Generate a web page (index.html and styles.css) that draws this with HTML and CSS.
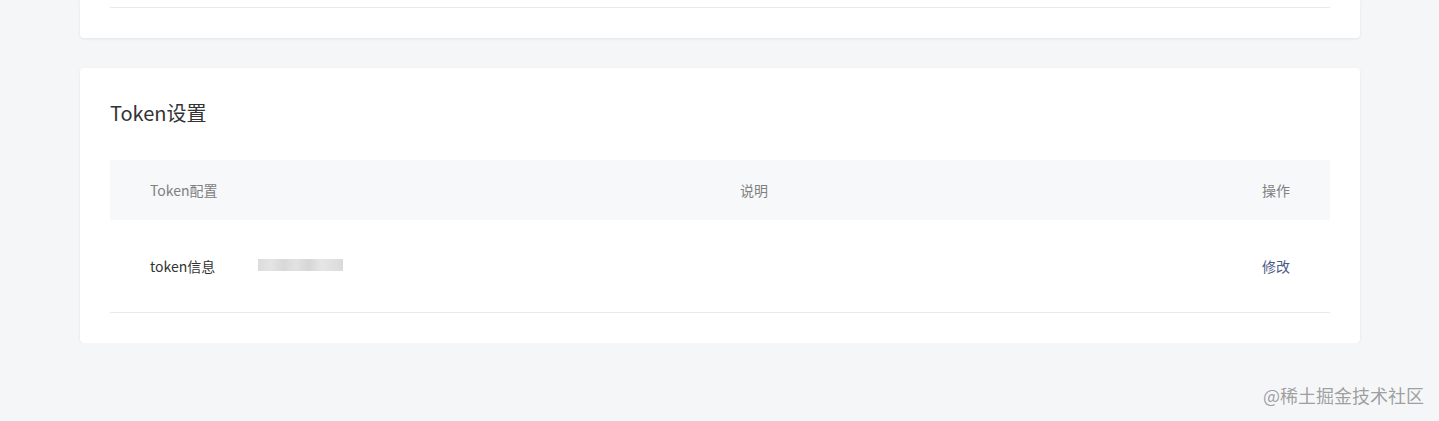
FILE: index.html
```html
<!DOCTYPE html>
<html lang="zh-CN">
<head>
<meta charset="utf-8">
<title>Token设置</title>
<link rel="stylesheet" href="styles.css">
</head>
<body>
<div class="page">
  <div class="card card-top">
    <div class="top-rest"></div>
  </div>
  <div class="card card-main">
    <h2 class="title">Token设置</h2>
    <div class="table">
      <div class="thead">
        <div class="cell">Token配置</div>
        <div class="cell">说明</div>
        <div class="cell right">操作</div>
      </div>
      <div class="trow">
        <div class="cell token-cell">
          <span class="label">token信息</span>
          <span class="masked"></span>
        </div>
        <div class="cell"></div>
        <div class="cell right"><a class="link" href="#">修改</a></div>
      </div>
    </div>
  </div>
</div>
<div class="watermark">@稀土掘金技术社区</div>
</body>
</html>
```
FILE: styles.css
```css
html, body {
  margin: 0;
  padding: 0;
  background: #f5f6f8;
  font-family: "Noto Sans CJK SC", "Noto Sans", sans-serif;
  color: #333;
}
.page {
  padding: 0 79px 0 80px;
}
.card {
  background: #fff;
  border-radius: 4px;
  box-shadow: 0 1px 3px rgba(0, 0, 0, 0.08);
}
.card-top {
  border-top-left-radius: 0;
  border-top-right-radius: 0;
  padding: 0 30px 30px;
}
.top-rest {
  height: 7px;
  border-bottom: 1px solid #e8e9eb;
}
.card-main {
  margin-top: 30px;
  padding: 30px;
}
.title {
  margin: 0 0 32px;
  font-size: 20px;
  font-weight: 400;
  line-height: 30px;
  color: #333;
}
.thead, .trow {
  display: grid;
  grid-template-columns: 590px 1fr auto;
  padding: 0 40px;
  align-items: center;
  font-size: 14px;
}
.thead {
  height: 60px;
  background: #f7f8fa;
  color: #808080;
}
.trow {
  height: 92px;
  border-bottom: 1px solid #e8e9eb;
  color: #333;
}
.right {
  text-align: right;
}
.token-cell {
  display: flex;
  align-items: center;
}
.label {
  width: 108px;
}
.masked {
  display: inline-block;
  width: 85px;
  height: 12px;
  margin-top: -2px;
  background: linear-gradient(90deg, #dcdcdc 0%, #e4e4e4 15%, #d8d8d8 30%, #e2e2e2 45%, #d6d6d6 60%, #e6e6e6 75%, #dadada 100%);
}
.link {
  color: #4b5b86;
  text-decoration: none;
}
.watermark {
  position: absolute;
  right: 15px;
  top: 382px;
  font-size: 18px;
  color: rgba(120, 120, 120, 0.7);
}
```
